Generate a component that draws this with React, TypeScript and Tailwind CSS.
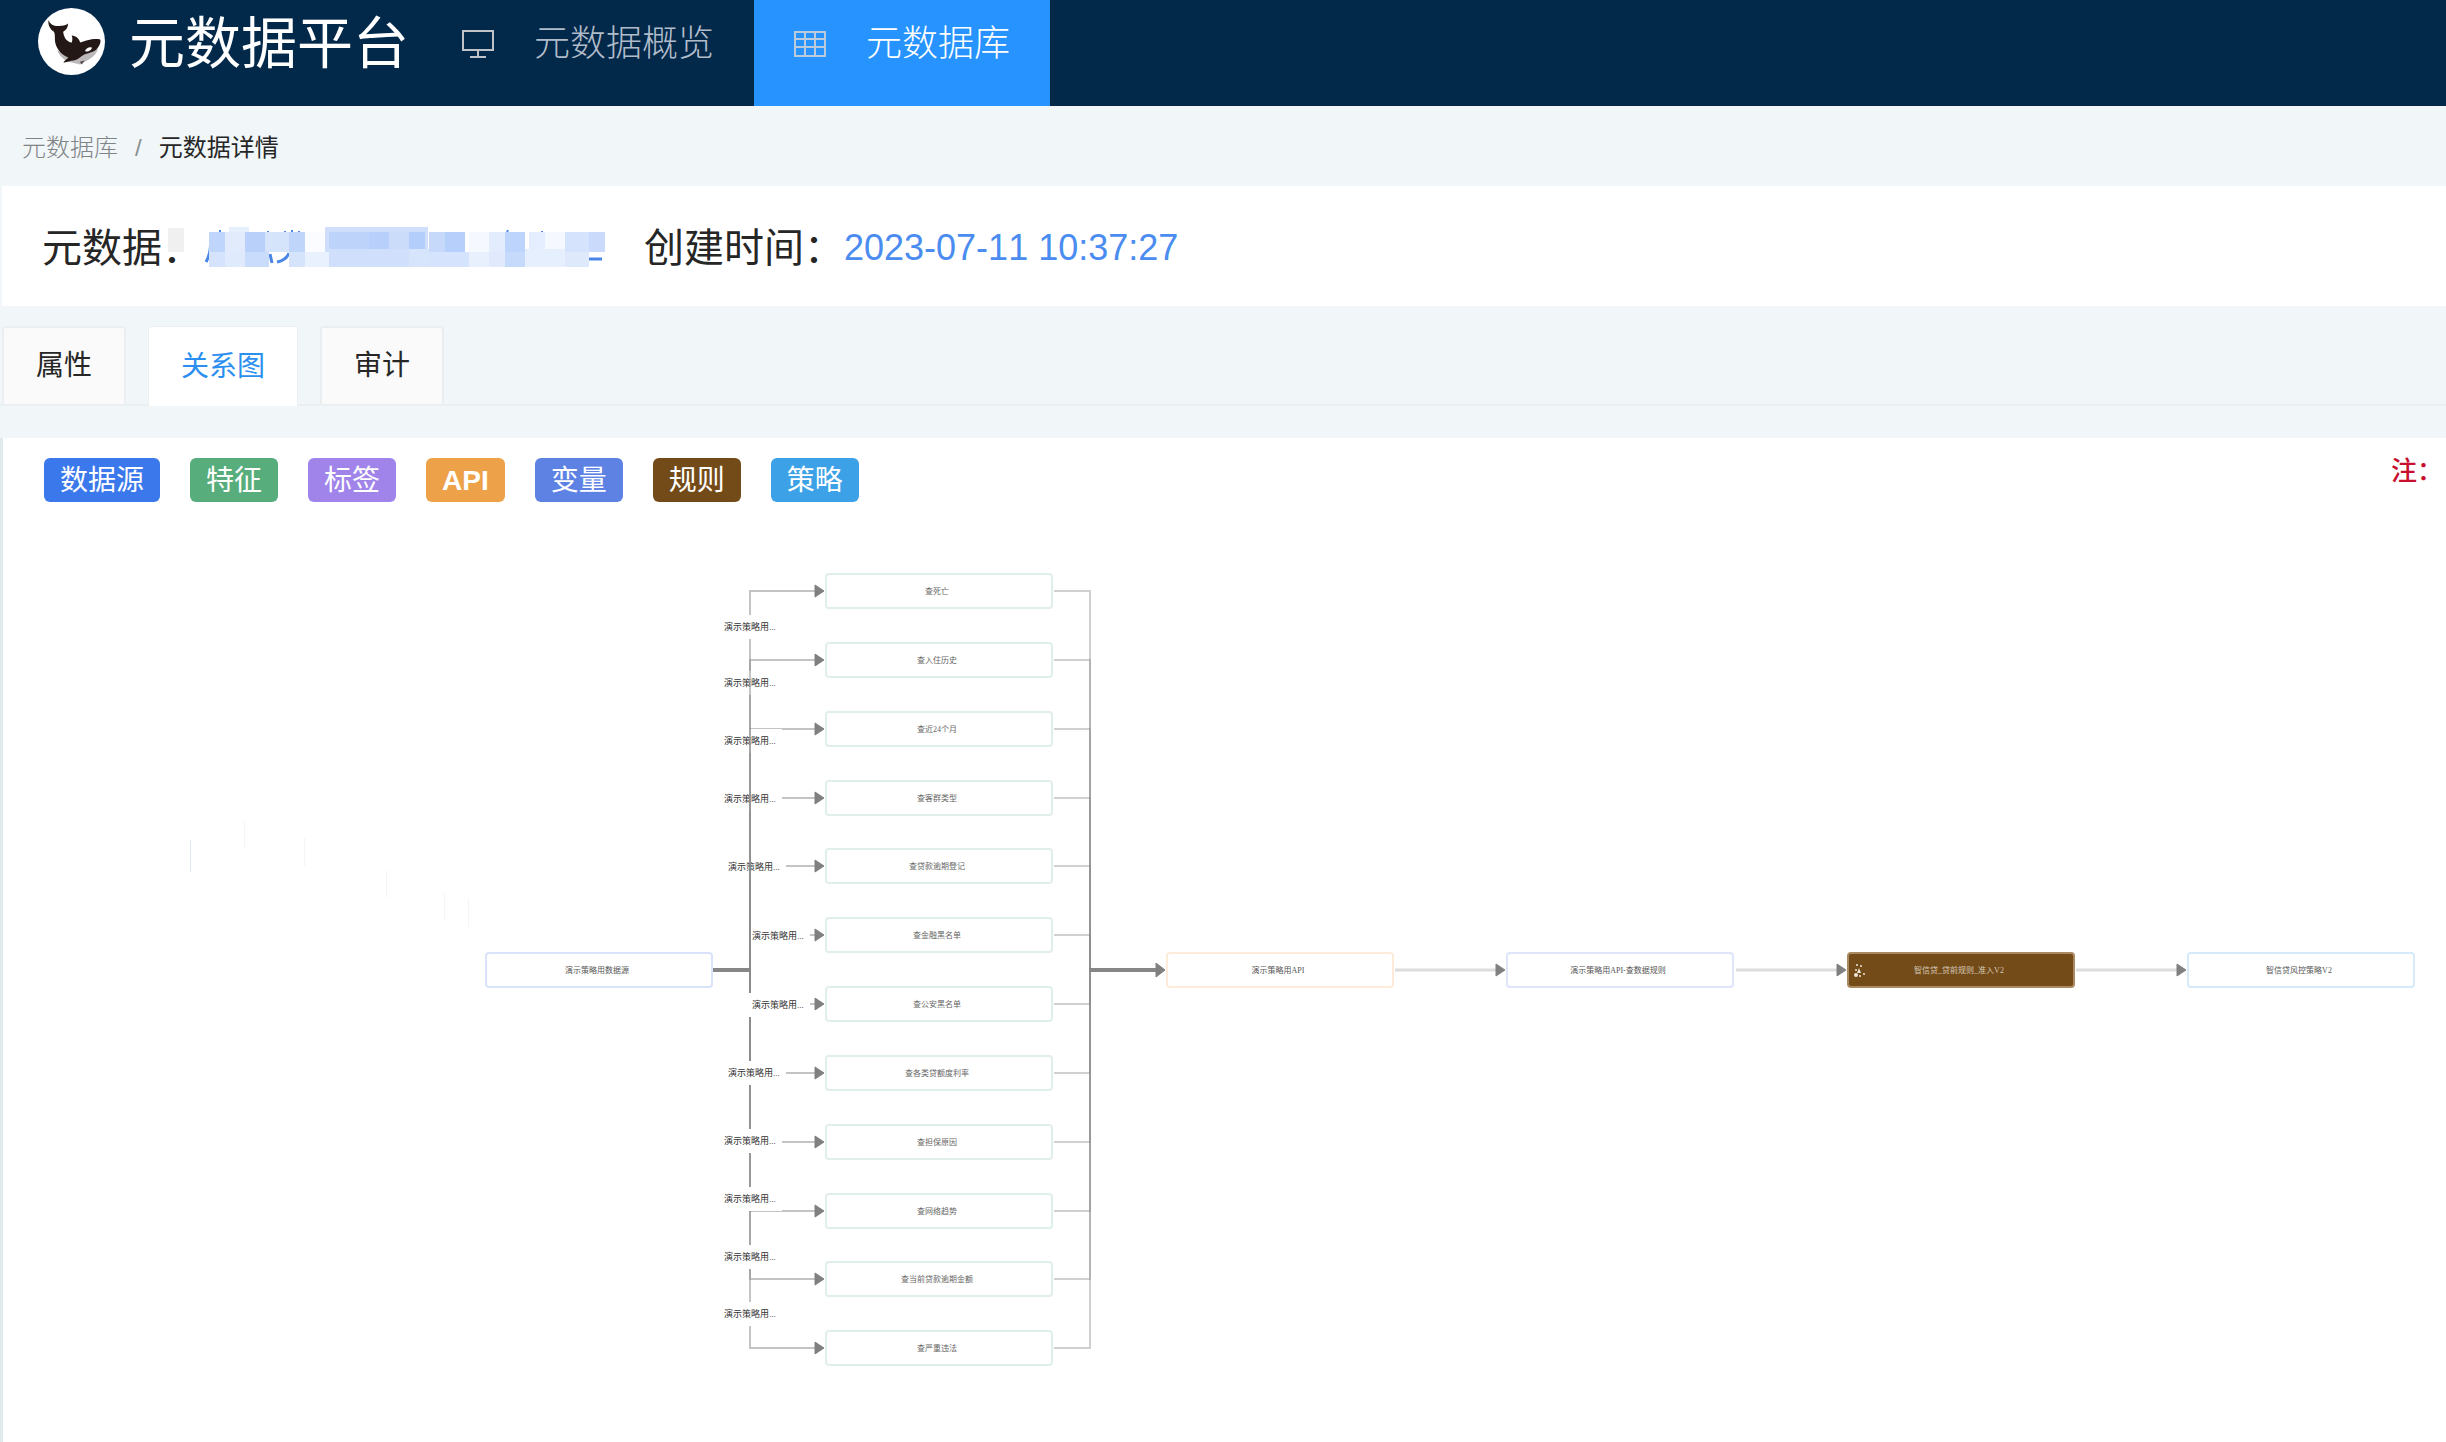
const navItems = [
  { label: "元数据概览", icon: "monitor", active: false },
  { label: "元数据库", icon: "grid", active: true },
];

const tabs = [
  { label: "属性", active: false },
  { label: "关系图", active: true },
  { label: "审计", active: false },
];

const legend = [
  { label: "数据源", color: "bg-[#3b78ec]" },
  { label: "特征", color: "bg-[#58ad7c]" },
  { label: "标签", color: "bg-[#a084ea]" },
  { label: "API", color: "bg-[#eda149]" },
  { label: "变量", color: "bg-[#5d82e4]" },
  { label: "规则", color: "bg-[#734b18]" },
  { label: "策略", color: "bg-[#3ca1e6]" },
];

// feature column: node centre y, edge label centre
const features = [
  { text: "查死亡", y: 591, lx: 750, ly: 627 },
  { text: "查入住历史", y: 660, lx: 750, ly: 683 },
  { text: "查近24个月", y: 729, lx: 750, ly: 741 },
  { text: "查客群类型", y: 798, lx: 750, ly: 799 },
  { text: "查贷款逾期登记", y: 866, lx: 754, ly: 867 },
  { text: "查金融黑名单", y: 935, lx: 778, ly: 936 },
  { text: "查公安黑名单", y: 1004, lx: 778, ly: 1005 },
  { text: "查各类贷额度利率", y: 1073, lx: 754, ly: 1073 },
  { text: "查担保原因", y: 1142, lx: 750, ly: 1141 },
  { text: "查网络趋势", y: 1211, lx: 750, ly: 1199 },
  { text: "查当前贷款逾期金额", y: 1279, lx: 750, ly: 1257 },
  { text: "查严重违法", y: 1348, lx: 750, ly: 1314 },
];

const chain = [
  { text: "演示策略用数据源", x: 485, stroke: "#dbe3fb", fill: "#fff", color: "#555" },
  { text: "演示策略用API", x: 1166, stroke: "#fbebd8", fill: "#fff", color: "#555" },
  { text: "演示策略用API-查数据规则", x: 1506, stroke: "#dfe5fa", fill: "#fff", color: "#555" },
  { text: "智信贷_贷前规则_准入V2", x: 1847, stroke: "#a98a63", fill: "#734b18", color: "#d6c9b8" },
  { text: "智信贷风控策略V2", x: 2187, stroke: "#d6eafa", fill: "#fff", color: "#555" },
];

// leftovers of dragged nodes on the canvas
const ghosts = [
  { x: 190, y: 840, h: 32, color: "#e3e8fc" },
  { x: 244, y: 820, h: 28, color: "#f5f5f7" },
  { x: 304, y: 838, h: 28, color: "#f5f5f7" },
  { x: 386, y: 870, h: 28, color: "#f5f5f7" },
  { x: 444, y: 892, h: 28, color: "#f5f5f7" },
  { x: 468, y: 898, h: 29, color: "#f5f5f7" },
];

// x, y, width, height, colour of every masked block
const mask: [number, number, number, number, string][] = [
  [209, 232, 16, 20, "#bfd5fb"],
  [225, 232, 20, 20, "#e1ebfb"],
  [229, 227, 20, 5, "#e6effc"],
  [245, 232, 20, 20, "#b9d0fa"],
  [265, 232, 24, 20, "#d5e4fb"],
  [289, 232, 16, 20, "#c0d5fa"],
  [305, 232, 20, 20, "#fbfcff"],
  [325, 227, 103, 25, "#cfdffb"],
  [329, 232, 40, 20, "#bdd3fa"],
  [369, 232, 20, 20, "#b7cffa"],
  [389, 232, 20, 20, "#cbdcfb"],
  [409, 232, 16, 20, "#b4cefb"],
  [429, 232, 16, 20, "#c6d9fb"],
  [445, 232, 20, 20, "#b6cffb"],
  [469, 232, 20, 20, "#f5f9ff"],
  [489, 232, 16, 20, "#e3ecfc"],
  [505, 232, 20, 20, "#bdd5fc"],
  [529, 232, 16, 20, "#e4eefe"],
  [545, 232, 20, 20, "#f5f8ff"],
  [565, 232, 24, 20, "#d5e3fc"],
  [589, 232, 16, 20, "#c9dafb"],
  [209, 252, 16, 15, "#d5e4fc"],
  [225, 252, 20, 15, "#dfeafd"],
  [245, 252, 24, 15, "#c9dcfc"],
  [289, 252, 16, 15, "#d5e3fb"],
  [305, 252, 24, 15, "#e9f0fe"],
  [329, 249, 80, 18, "#cfdffc"],
  [409, 249, 20, 18, "#d6e5fc"],
  [429, 252, 40, 15, "#d5e3fc"],
  [469, 252, 20, 15, "#e9f0fd"],
  [489, 252, 16, 15, "#e0eafc"],
  [505, 252, 20, 15, "#c6dafc"],
  [525, 249, 40, 18, "#e6effe"],
  [565, 252, 24, 15, "#dfe9fc"],
];

function Logo() {
  return (
    <svg viewBox="38 8 67 67" className="size-[67px] shrink-0" aria-hidden="true">
      <circle cx="71.5" cy="41.5" r="33.5" fill="#fff" />
      <path
        d="M57 50 C60 58 67 62 74 63 L80 64.5 L83 62.5 C91 59 96 55 98 49 L86 53 L72 59 Z"
        fill="#bdb9bb"
      />
      <path
        d="M48.6 20 C50 25 55 26.5 59 26 C62 26 66 25.5 67.9 23.6 C68.3 27 66 30.5 63.2 31.8 C63.6 37 66.5 42 71.8 42.6 C72.6 39.6 72.6 37.5 71.6 35.4 C76 35.6 79.3 38.8 80.2 42.6 C85 40.6 94 37.8 99.6 39.3 C101.8 40.5 99.8 45.5 97 49 C93 52.5 87.5 53 83.4 55 C80.5 57 77.5 59.8 73.6 60.6 C70 60.6 67 62.8 63.4 62.4 C64.6 60 67.2 58.8 68.4 57.4 C62 55.4 57.4 50 55.6 44 C54.2 39 55.6 35.5 54 31.8 C50.2 29.4 47.6 25 48.6 20 Z"
        fill="#231815"
      />
      <path d="M85 51.3 C85.4 48.6 88.5 46.8 91.8 47.4 C92 49.8 88.4 52 85 51.3 Z" fill="#fff" />
      <path d="M80 61.8 L84.8 60.4 L81.6 64.4 Z" fill="#4d4446" />
    </svg>
  );
}

function NavIcon({ name }: { name: string }) {
  if (name === "monitor") {
    return (
      <svg viewBox="0 0 32 28" className="h-7 w-8" fill="none" stroke="#bfc3c8" strokeWidth="2" aria-hidden="true">
        <path d="M1 1h30v19H1zM16 20v6M8 27h16" />
      </svg>
    );
  }
  return (
    <svg viewBox="0 0 32 28" className="h-7 w-8" fill="none" stroke="#bccbdc" aria-hidden="true">
      <path d="M1 2h30v24H1z" strokeWidth="2" />
      <path d="M1 9h30M1 17h30M11 2v24M21 2v24" strokeWidth="2" />
    </svg>
  );
}

function Node({ x, y, text, stroke, fill, color }: { x: number; y: number; text: string; stroke: string; fill: string; color: string }) {
  return (
    <g>
      <rect x={x + 1} y={y - 17} width="226" height="34" rx="3" fill={fill} stroke={stroke} strokeWidth="2" />
      <text x={x + 112} y={y + 3} textAnchor="middle" className="text-[8px]" fill={color}>
        {text}
      </text>
    </g>
  );
}

function Arrow({ x, y, size = 6 }: { x: number; y: number; size?: number }) {
  return <path d={`M${x - 9} ${y - size} L${x} ${y} L${x - 9} ${y + size} Z`} fill="#808080" stroke="#808080" strokeLinejoin="round" />;
}

function RelationGraph() {
  return (
    <svg
      viewBox="3 502 2443 940"
      className="block w-full font-['Liberation_Serif','Noto_Sans_CJK_SC',serif]"
      role="img"
      aria-label="关系图"
    >
      {ghosts.map((g) => (
        <rect key={g.x} x={g.x} y={g.y} width="1" height={g.h} fill={g.color} />
      ))}

      {/* bottom edge first, so that every label hides only the edges under it */}
      {[...features].reverse().map((f) => (
        <g key={f.text}>
          <path d={`M750 970V${f.y}H817`} fill="none" stroke="#8a8a8a" strokeOpacity="0.5" strokeWidth="2" />
          <rect x={f.lx - 32} y={f.ly - 12} width="64" height="24" fill="#fff" />
          <text x={f.lx} y={f.ly + 3} textAnchor="middle" className="text-[9px]" fill="#333">
            演示策略用...
          </text>
          <Arrow x={824} y={f.y} />
          <path d={`M1054 ${f.y}H1090V970`} fill="none" stroke="#8a8a8a" strokeOpacity="0.4" strokeWidth="2" />
        </g>
      ))}
      <path d="M713 970H751M1089 970H1158" stroke="#868686" strokeWidth="4" />
      <Arrow x={1165} y={970} size={7} />
      {[1506, 1847, 2187].map((x) => (
        <g key={x}>
          <path d={`M${x - 111} 970H${x - 8}`} stroke="#dcdcdc" strokeWidth="3" />
          <Arrow x={x - 1} y={970} />
        </g>
      ))}

      {features.map((f) => (
        <Node key={f.text} x={825} y={f.y} text={f.text} stroke="#e0efe9" fill="#fff" color="#666" />
      ))}
      {chain.map((n) => (
        <Node key={n.text} y={970} {...n} />
      ))}
      <g fill="#efe6da">
        <circle cx="1857" cy="965" r="1" />
        <circle cx="1861" cy="966" r="1" />
        <circle cx="1856" cy="970" r="1" />
        <path d="M1859 968l2 5h-4z" />
        <circle cx="1856" cy="975" r="2" />
        <circle cx="1860" cy="976" r="1" />
        <circle cx="1864" cy="974" r="1" />
      </g>
    </svg>
  );
}

function App() {
  return (
    <div className="min-h-screen overflow-x-hidden bg-[#f1f6f9] font-['Liberation_Sans','Noto_Sans_CJK_SC',sans-serif] text-[#262626]">
      <header className="flex h-[106px] bg-[#02284a]">
        <div className="flex items-center gap-6 pb-6 pl-[38px] pr-[21px]">
          <Logo />
          <span className="w-[272px] whitespace-nowrap pt-1.5 text-[56px] leading-none text-white">元数据平台</span>
        </div>
        <nav className="flex text-4xl font-light">
          {navItems.map((item) => (
            <a
              key={item.label}
              href="#"
              className={
                item.active
                  ? "flex items-center gap-10 bg-[#2693ff] px-10 pb-[18px] text-white"
                  : "flex items-center gap-10 px-10 pb-[18px] text-[#b0bcc9]"
              }
            >
              <NavIcon name={item.icon} />
              {item.label}
            </a>
          ))}
        </nav>
      </header>

      <nav className="flex h-20 items-center gap-[17px] pt-1 pl-[22px] text-2xl" aria-label="breadcrumb">
        <a href="#" className="font-light text-[#808487]">元数据库</a>
        <span className="text-[#8c9093]">/</span>
        <span>元数据详情</span>
      </nav>

      <section className="ml-0.5 flex h-[120px] items-center bg-white pt-1 pl-10 text-[40px] leading-none">
        <span className="relative">
          元数据：
          <span className="absolute top-0 left-[126px] h-6 w-4 bg-[#f0f0f0]" />
        </span>
        <svg viewBox="202 226 410 44" className="h-11 w-[410px]" aria-hidden="true">
          <g fill="none" stroke="#4a86e8" strokeWidth="3">
            <path d="M211 232C211 248 210 255 206 262M270 254l2 9M277 262c6-1 10-4 12-9M589 259h13" />
            <path d="M220 230v3M268 231v3M285 231v4M292 230v4M299 231v3M508 230l-2 5M542 231v3" strokeWidth="2" />
          </g>
          {mask.map(([x, y, w, h, color]) => (
            <rect key={`${x}-${y}`} x={x} y={y} width={w} height={h} fill={color} />
          ))}
        </svg>
        <span className="ml-8">创建时间：</span>
        <span className="text-4xl text-[#4a8cf0] [font-kerning:none]">2023-07-11 10:37:27</span>
      </section>

      <div className="mt-5 flex border-b-2 border-[#ebeff1] pl-0.5 text-[28px] leading-none" role="tablist">
        {tabs.map((tab) => (
          <button
            key={tab.label}
            role="tab"
            aria-selected={tab.active}
            className={
              tab.active
                ? "-mb-0.5 mr-[22px] h-20 rounded-t-sm border border-b-0 border-[#ebeff1] bg-white px-8 text-[#2a8ff0]"
                : "mr-[22px] h-[78px] rounded-t-sm border-2 border-b-0 border-[#ebeef0] bg-[#fafafa] px-8"
            }
          >
            {tab.label}
          </button>
        ))}
      </div>

      <main className="mt-8 border-l-3 border-[#e2e9ea] bg-white">
        <div className="flex items-start gap-[30px] pt-5 pl-[41px]">
          {legend.map((item) => (
            <span
              key={item.label}
              className={`${item.color} flex h-11 items-center rounded-md px-4 pt-0.5 text-[28px] leading-none text-white ${
                item.label === "API" ? "font-bold" : "font-normal"
              }`}
            >
              {item.label}
            </span>
          ))}
          <span className="ml-auto pr-[3px] text-[26px] leading-none font-medium text-[#c8102e]">注：</span>
        </div>
        <RelationGraph />
      </main>
    </div>
  );
}

export default App;
